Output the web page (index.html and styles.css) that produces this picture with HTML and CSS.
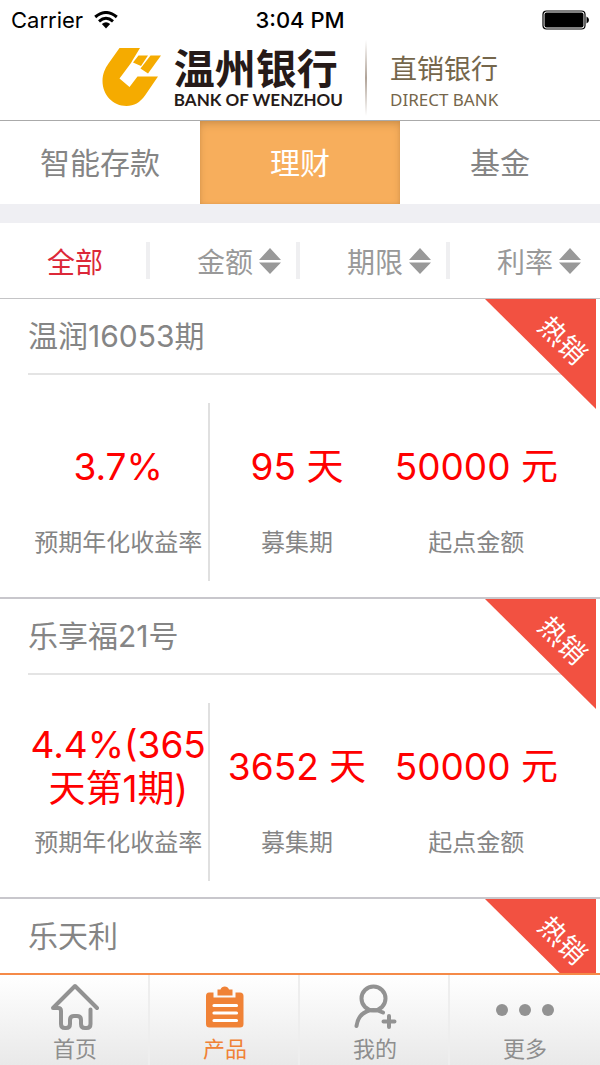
FILE: index.html
```html
<!DOCTYPE html>
<html lang="zh-CN">
<head>
<meta charset="utf-8">
<meta name="viewport" content="width=device-width, initial-scale=1">
<title>温州银行 直销银行</title>
<link rel="stylesheet" href="styles.css">
</head>
<body>
<div class="status">
  <div class="status-side">
    <span>Carrier</span>
    <svg class="wifi" viewBox="0 0 24 18" aria-hidden="true">
      <path d="M1.200 6Q12-3 22.800 6M5 10.300Q12 4.300 19 10.300" fill="none" stroke="#000" stroke-width="3"/>
      <path d="M7.800 13Q12 9.600 16.200 13L12 17.500Z"/>
    </svg>
  </div>
  <span class="clock">3:04 PM</span>
  <div class="status-side status-end">
    <svg class="battery" viewBox="0 0 47 20" aria-hidden="true">
      <rect x="1" y="1" width="42" height="18" rx="3.500" fill="#fff" stroke="#000" stroke-width="1.200"/>
      <rect x="2.500" y="2.500" width="39" height="15" rx="2"/>
      <path d="M44.500 6.500Q47 7.500 47 10T44.500 13.500Z"/>
    </svg>
  </div>
</div>

<header class="brand">
  <svg class="brand-mark" viewBox="0 0 60 60" aria-hidden="true">
    <g fill="#f5ab00">
      <path d="M17.500 1H38L31 12.500 29 16 17.500 31.500 27.500 40 35.500 29.500H56L43 48.500C38 55.500 32 59 24.500 59C11 59 .5 48 .5 34C.5 27 3 21.500 6.500 16.500Z"/>
      <path d="M36.500 8.500H46L39 19 31 15.500Z"/>
      <path d="M48.500 8.500H59L46 26.500 38.500 21.500Z"/>
    </g>
  </svg>
  <div class="bank">
    <span class="bank-cn">温州银行</span>
    <span class="bank-en">BANK OF WENZHOU</span>
  </div>
  <div class="brand-line"></div>
  <div class="direct">
    <span class="direct-cn">直销银行</span>
    <span class="direct-en">DIRECT BANK</span>
  </div>
</header>

<nav class="tabs">
  <button class="tab" type="button">智能存款</button>
  <button class="tab tab-active" type="button">理财</button>
  <button class="tab" type="button">基金</button>
</nav>

<div class="filters">
  <button class="filter filter-active" type="button">全部</button>
  <button class="filter filter-sort" type="button">金额<svg class="sort" viewBox="0 0 22 26" aria-hidden="true"><path d="M0 12L11 0 22 12ZM0 14.500H22L11 26Z"/></svg></button>
  <button class="filter filter-sort" type="button">期限<svg class="sort" viewBox="0 0 22 26" aria-hidden="true"><path d="M0 12L11 0 22 12ZM0 14.500H22L11 26Z"/></svg></button>
  <button class="filter filter-sort" type="button">利率<svg class="sort" viewBox="0 0 22 26" aria-hidden="true"><path d="M0 12L11 0 22 12ZM0 14.500H22L11 26Z"/></svg></button>
</div>

<main class="products">
  <article class="product">
    <h2 class="product-name">温润16053期</h2>
    <div class="stats">
      <div class="stat"><div class="value">3.7%</div><div class="label">预期年化收益率</div></div>
      <div class="stat"><div class="value">95 天</div><div class="label">募集期</div></div>
      <div class="stat"><div class="value">50000 元</div><div class="label">起点金额</div></div>
    </div>
    <svg class="ribbon" viewBox="0 0 111 110"><path d="M0 0H111V110Z"/><text x="77" y="51" transform="rotate(45 77 42)">热销</text></svg>
  </article>
  <article class="product">
    <h2 class="product-name">乐享福21号</h2>
    <div class="stats">
      <div class="stat"><div class="value">4.4%(365天第1期)</div><div class="label">预期年化收益率</div></div>
      <div class="stat"><div class="value">3652 天</div><div class="label">募集期</div></div>
      <div class="stat"><div class="value">50000 元</div><div class="label">起点金额</div></div>
    </div>
    <svg class="ribbon" viewBox="0 0 111 110"><path d="M0 0H111V110Z"/><text x="77" y="51" transform="rotate(45 77 42)">热销</text></svg>
  </article>
  <article class="product">
    <h2 class="product-name">乐天利</h2>
    <svg class="ribbon" viewBox="0 0 111 110"><path d="M0 0H111V110Z"/><text x="77" y="51" transform="rotate(45 77 42)">热销</text></svg>
  </article>
</main>

<nav class="bottom">
  <a class="item" href="#home">
    <svg class="icon" viewBox="0 0 50 50" fill="none" stroke="#929292" stroke-width="4" stroke-linecap="round" stroke-linejoin="round" aria-hidden="true">
      <path d="M40.500 26.500V41Q40.500 45 36.500 45H35Q31 45 31 41V37Q31 33 27 33H24Q20 33 20 37V41Q20 45 16 45H15Q11 45 11 41V28Q11 25 8 25H3L25 3 47 25"/>
    </svg>
    <span>首页</span>
  </a>
  <a class="item item-active" href="#products">
    <svg class="icon" viewBox="0 0 50 50" aria-hidden="true">
      <path d="M9 9.500H13.500V14.500H35.500V9.500H40Q43.500 9.500 43.500 13V41Q43.500 44.500 40 44.500H9.500Q6 44.500 6 41V13Q6 9.500 9 9.500Z" fill="#f08236"/>
      <path d="M17.500 6.500H20.500C21.500 2.500 28 2.500 29 6.500H32.500V12.500H17.500Z" fill="#f08236"/>
      <path d="M14 22.500H36.500M14 30H36.500M14 37.500H36.500" stroke="#fff" stroke-width="3.200" stroke-linecap="round"/>
    </svg>
    <span>产品</span>
  </a>
  <a class="item" href="#mine">
    <svg class="icon" viewBox="0 0 50 50" fill="none" stroke="#929292" stroke-width="4" stroke-linecap="round" aria-hidden="true">
      <ellipse cx="23.500" cy="15.500" rx="12" ry="12"/>
      <path d="M6.500 43C8.500 28 22 24 33 29.500M33.500 38.500H44.500M39 33V44"/>
    </svg>
    <span>我的</span>
  </a>
  <a class="item" href="#more">
    <svg class="icon icon-dots" viewBox="0 0 60 50" fill="#929292" aria-hidden="true">
      <circle cx="7" cy="27" r="6"/><circle cx="30" cy="27" r="6"/><circle cx="53" cy="27" r="6"/>
    </svg>
    <span>更多</span>
  </a>
</nav>
</body>
</html>
```

FILE: styles.css
```css
* { box-sizing: border-box; }

body {
  margin: 0;
  height: 100vh;
  display: flex;
  flex-direction: column;
  overflow: hidden;
  background: #fff;
  color: #858585;
  font-family: Inter, "Noto Sans CJK SC", sans-serif;
  font-weight: 390;
}

button {
  margin: 0;
  padding: 0;
  border: 0;
  background: none;
  color: inherit;
  font: inherit;
}

.status {
  display: flex;
  align-items: center;
  height: 40px;
  padding: 0 11px;
  color: #000;
  font-size: 22px;
  font-weight: 400;
}
.status-side { flex: 1; display: flex; align-items: center; gap: 11px; }
.status-end { justify-content: flex-end; }
.clock { font-weight: 500; }
.wifi { width: 24px; height: 18px; }
.battery { width: 47px; height: 20px; }

.brand {
  display: flex;
  justify-content: center;
  height: 81px;
  border-bottom: 1px solid #aaa;
}
.brand-mark { width: 60px; height: 60px; margin: 7px 12px 0 0; }
.bank, .direct { display: flex; flex-direction: column; white-space: nowrap; }
.bank { color: #261a18; }
.bank-cn { font-size: 41px; line-height: 42px; font-weight: 700; margin-top: 8px; }
.bank-en { font: 700 17px/20px Lato, sans-serif; }
.brand-line {
  width: 2px;
  margin: 0 23px 4px 22px;
  background: linear-gradient(#fff, #b0a398 50%, #fff);
}
.direct { color: #75664b; }
.direct-cn { font-size: 27px; line-height: 32px; margin-top: 14px; }
.direct-en { font: 400 17px/24px "Noto Sans", sans-serif; margin-top: 2px; }

.tabs {
  display: grid;
  grid-template-columns: repeat(3, 1fr);
  height: 83px;
  font-size: 30px;
}
.tab { padding-bottom: 4px; }
.tab-active {
  background: #f7ae5c;
  color: #fff;
  box-shadow: inset 0 4px 10px -2px #c88c48, inset 0 0 3px #e09c50;
}

.filters {
  display: grid;
  grid-template-columns: repeat(4, 1fr);
  align-items: center;
  height: 95px;
  border-top: 19px solid #efeff3;
  border-bottom: 1px solid #c4c4c6;
  font-size: 28px;
  color: #999;
}
.filter {
  display: flex;
  align-items: center;
  justify-content: center;
  gap: 6px;
  height: 37px;
  border-right: 4px solid #efeff1;
}
.filter:last-child { border-color: transparent; }
.filter-active { color: #dc2838; padding-left: 4px; }
.filter-sort { padding-left: 32px; }
.sort { width: 22px; height: 26px; fill: #999; }

.products { flex: 1; min-height: 0; overflow: hidden; }
.product {
  position: relative;
  height: 300px;
  border-bottom: 2px solid #c8c7cc;
}
.product-name {
  margin: 0 28px;
  height: 76px;
  border-bottom: 2px solid #e4e4e4;
  font-size: 30px;
  line-height: 75px;
  font-weight: inherit;
}
.stats {
  display: grid;
  grid-template-columns: repeat(3, 1fr);
  margin: 28px 34px 0 28px;
  height: 178px;
  text-align: center;
}
.stat:first-child { margin-right: -3px; border-right: 2px solid #e0e0e0; }
.value {
  display: flex;
  align-items: center;
  justify-content: center;
  height: 88px;
  margin-top: 20px;
  color: #f00;
  font-size: 37px;
  line-height: 44px;
}
.label { margin-top: 14px; font-size: 24px; line-height: 36px; white-space: nowrap; }
.ribbon {
  position: absolute;
  top: 0;
  right: 4px;
  width: 111px;
  height: 110px;
  fill: #f25141;
}
.ribbon text { fill: #fff; font-size: 27px; font-weight: 400; text-anchor: middle; }

.bottom {
  display: grid;
  grid-template-columns: repeat(4, 1fr);
  height: 92px;
  border-top: 2px solid #f58a48;
  background: linear-gradient(#fff, #e9e9e9);
  font-size: 22px;
  color: #8e8e8e;
}
.item {
  display: flex;
  flex-direction: column;
  align-items: center;
  padding: 8px 0 0 2px;
  border-right: 2px solid #eee;
  color: inherit;
  line-height: 32px;
  text-decoration: none;
}
.item:last-child { border-color: transparent; }
.item-active { color: #f08236; }
.icon { width: 50px; height: 50px; }
.icon-dots { width: 60px; }
```
